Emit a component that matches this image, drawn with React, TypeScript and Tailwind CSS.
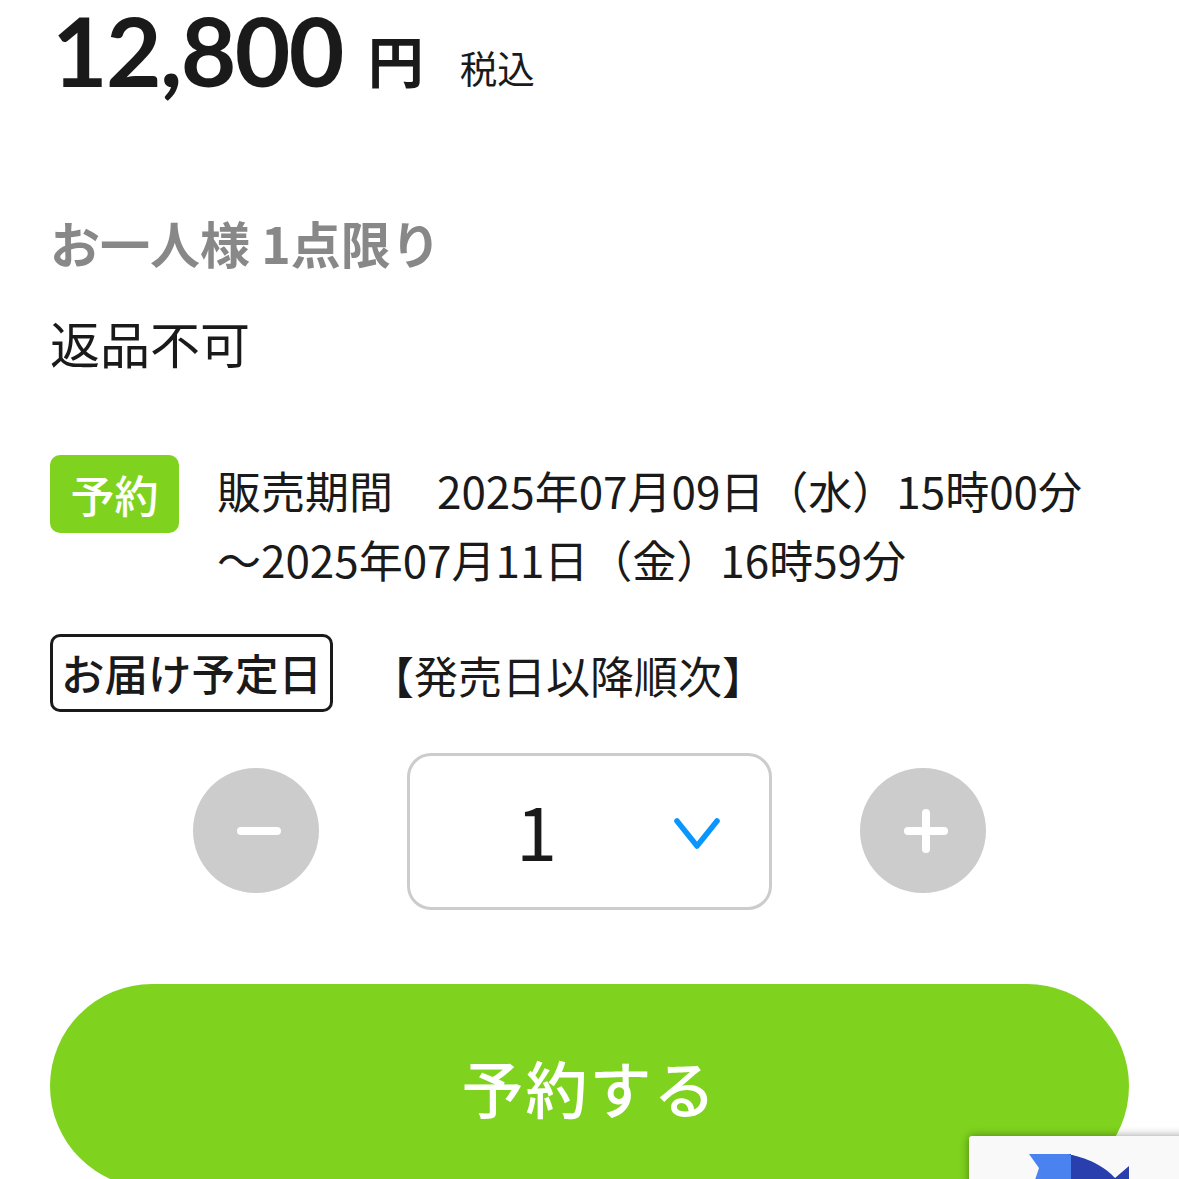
const font = "font-['Noto_Sans_CJK_JP','Noto_Sans',sans-serif]";

function RecaptchaBadge() {
  return (
    <div className="absolute left-[969px] top-[1136px] h-[60px] w-[256px] rounded-tl-[3px] bg-[#f9f9f9] shadow-[0_0_10px_rgba(0,0,0,0.4)]">
      <svg className="absolute left-[58px] top-[18px]" width="110" height="60" viewBox="0 0 110 60">
        <path d="M2 0H44V44H2L12 14Z" fill="#4a82f0" />
        <path d="M44 0C30 0 66 0 88 24L102 12V44H44Z" fill="#2a3fae" />
      </svg>
    </div>
  );
}

export default function App() {
  return (
    <div className={`relative h-[1179px] overflow-hidden bg-white px-[50px] text-[#1a1a1a] ${font}`}>
      <div className="flex h-[105px] items-end">
        <span className="ml-[2px] font-['Lato','Noto_Sans_CJK_JP',sans-serif] text-[96px] font-bold leading-[110px] tracking-[-1.7px]">12,800</span>
        <span className="ml-[25px] pb-[16px] text-[56px] font-bold leading-[60px]">円</span>
        <span className="ml-[36px] pb-[14px] text-[37.5px] leading-[48px]">税込</span>
      </div>

      <p className="mt-[102px] text-[50px] font-bold leading-[70px] text-[#888888]">お一人様 1点限り</p>
      <p className="mt-[30px] text-[50px] leading-[70px]">返品不可</p>

      <div className="mt-[78px] flex items-start">
        <span className="flex h-[78px] w-[129px] shrink-0 items-center justify-center rounded-[10px] bg-[#7fd31e] text-[44px] font-medium text-white">
          予約
        </span>
        <p className="ml-[38px] w-[880px] pt-[1px] text-[44px] leading-[69px]">
          販売期間　2025年07月09日（水）15時00分
          <br />
          ～2025年07月11日（金）16時59分
        </p>
      </div>

      <div className="mt-[40px] flex items-center">
        <span className="flex h-[78px] w-[283px] shrink-0 items-center justify-center rounded-[10px] border-[3px] border-[#1a1a1a] text-[43.5px] font-medium">
          お届け予定日
        </span>
        <span className="ml-[37px] pt-[4px] text-[44px]">【発売日以降順次】</span>
      </div>

      <div className="mt-[41px] flex items-center pl-[143px]">
        <button className="mb-[2px] flex h-[125px] w-[126px] items-center justify-center rounded-full bg-[#cccccc]">
          <span className="ml-[6px] h-[8px] w-[44px] rounded-full bg-white" />
        </button>
        <div className="ml-[88px] flex h-[157px] w-[365px] items-center rounded-[24px] border-[3px] border-[#cccccc] bg-white pl-[106px]">
          <span className="pb-[6px] text-[74px] leading-none">1</span>
          <svg className="ml-[117px] mt-[4px]" width="48" height="34" viewBox="0 0 48 34" fill="none">
            <path d="M3 4L23 29L43 4" stroke="#0a96ff" strokeWidth="5.5" strokeLinecap="round" strokeLinejoin="round" />
          </svg>
        </div>
        <button className="relative mb-[2px] ml-[88px] flex h-[125px] w-[126px] items-center justify-center rounded-full bg-[#cccccc]">
          <span className="ml-[6px] h-[8px] w-[44px] rounded-full bg-white" />
          <span className="absolute ml-[6px] h-[44px] w-[8px] rounded-full bg-white" />
        </button>
      </div>

      <button className="mt-[74px] flex h-[204px] w-[1079px] items-center justify-center rounded-[102px] bg-[#7fd31e] pt-[2px] text-[62px] font-medium tracking-[2px] text-white">
        予約する
      </button>

      <RecaptchaBadge />
    </div>
  );
}
